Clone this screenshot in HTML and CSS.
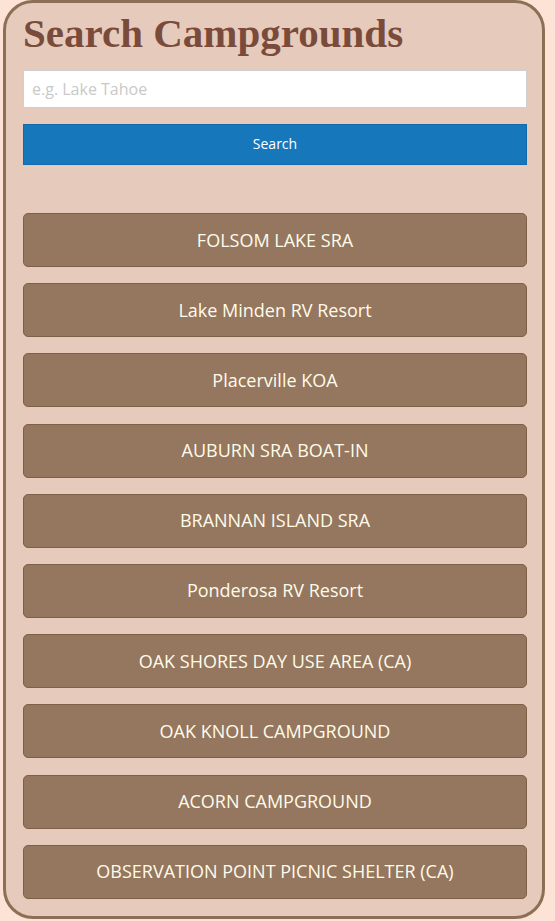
FILE: index.html
```html
<!DOCTYPE html>
<html lang="en">
<head>
<meta charset="utf-8">
<title>Search Campgrounds</title>
<link rel="stylesheet" href="styles.css">
</head>
<body>
<main class="panel">
  <h1 class="title">Search Campgrounds</h1>
  <form class="search">
    <input class="search-input" type="text" placeholder="e.g. Lake Tahoe">
    <button class="search-button" type="button">Search</button>
  </form>
  <ul class="results">
    <li class="result">FOLSOM LAKE SRA</li>
    <li class="result">Lake Minden RV Resort</li>
    <li class="result">Placerville KOA</li>
    <li class="result">AUBURN SRA BOAT-IN</li>
    <li class="result">BRANNAN ISLAND SRA</li>
    <li class="result">Ponderosa RV Resort</li>
    <li class="result">OAK SHORES DAY USE AREA (CA)</li>
    <li class="result">OAK KNOLL CAMPGROUND</li>
    <li class="result">ACORN CAMPGROUND</li>
    <li class="result">OBSERVATION POINT PICNIC SHELTER (CA)</li>
  </ul>
</main>
</body>
</html>
```
FILE: styles.css
```css
html, body {
  margin: 0;
  padding: 0;
  background: #fce3d5;
}

body {
  font-family: "Open Sans", "Noto Sans", sans-serif;
}

.panel {
  box-sizing: border-box;
  width: 542px;
  margin: 0 0 0 3px;
  padding: 6px 15px 17px 17px;
  background: #e6cbbc;
  border: 3px solid #8d6f56;
  border-radius: 30px;
}

.title {
  margin: 0;
  font-family: "Liberation Serif", "Times New Roman", serif;
  font-weight: bold;
  font-size: 41px;
  line-height: 49px;
  color: #7a4b3b;
}

.search {
  display: flex;
  flex-direction: column;
  gap: 16px;
  margin-top: 12px;
}

.search-input {
  box-sizing: border-box;
  width: 100%;
  height: 38px;
  margin: 0;
  padding: 0 8px;
  border: 1px solid #cfcfcf;
  background: #ffffff;
  font-family: "Open Sans", sans-serif;
  font-size: 16px;
  color: #333;
  outline: none;
}

.search-input::placeholder {
  color: #c9c9c9;
}

.search-button {
  box-sizing: border-box;
  width: 100%;
  height: 41px;
  margin: 0;
  padding: 0 0 2px;
  border: 1px solid #1468ab;
  background: #1777bb;
  color: #ffffff;
  font-family: "Open Sans", sans-serif;
  font-size: 14px;
}

.results {
  list-style: none;
  margin: 48px 0 0;
  padding: 0;
  display: flex;
  flex-direction: column;
  gap: 16.2px;
}

.result {
  box-sizing: border-box;
  height: 54px;
  padding-bottom: 1px;
  display: flex;
  align-items: center;
  justify-content: center;
  background: #94775e;
  border: 1px solid #7e6047;
  border-radius: 5px;
  color: #fffbea;
  font-size: 18px;
}
```
